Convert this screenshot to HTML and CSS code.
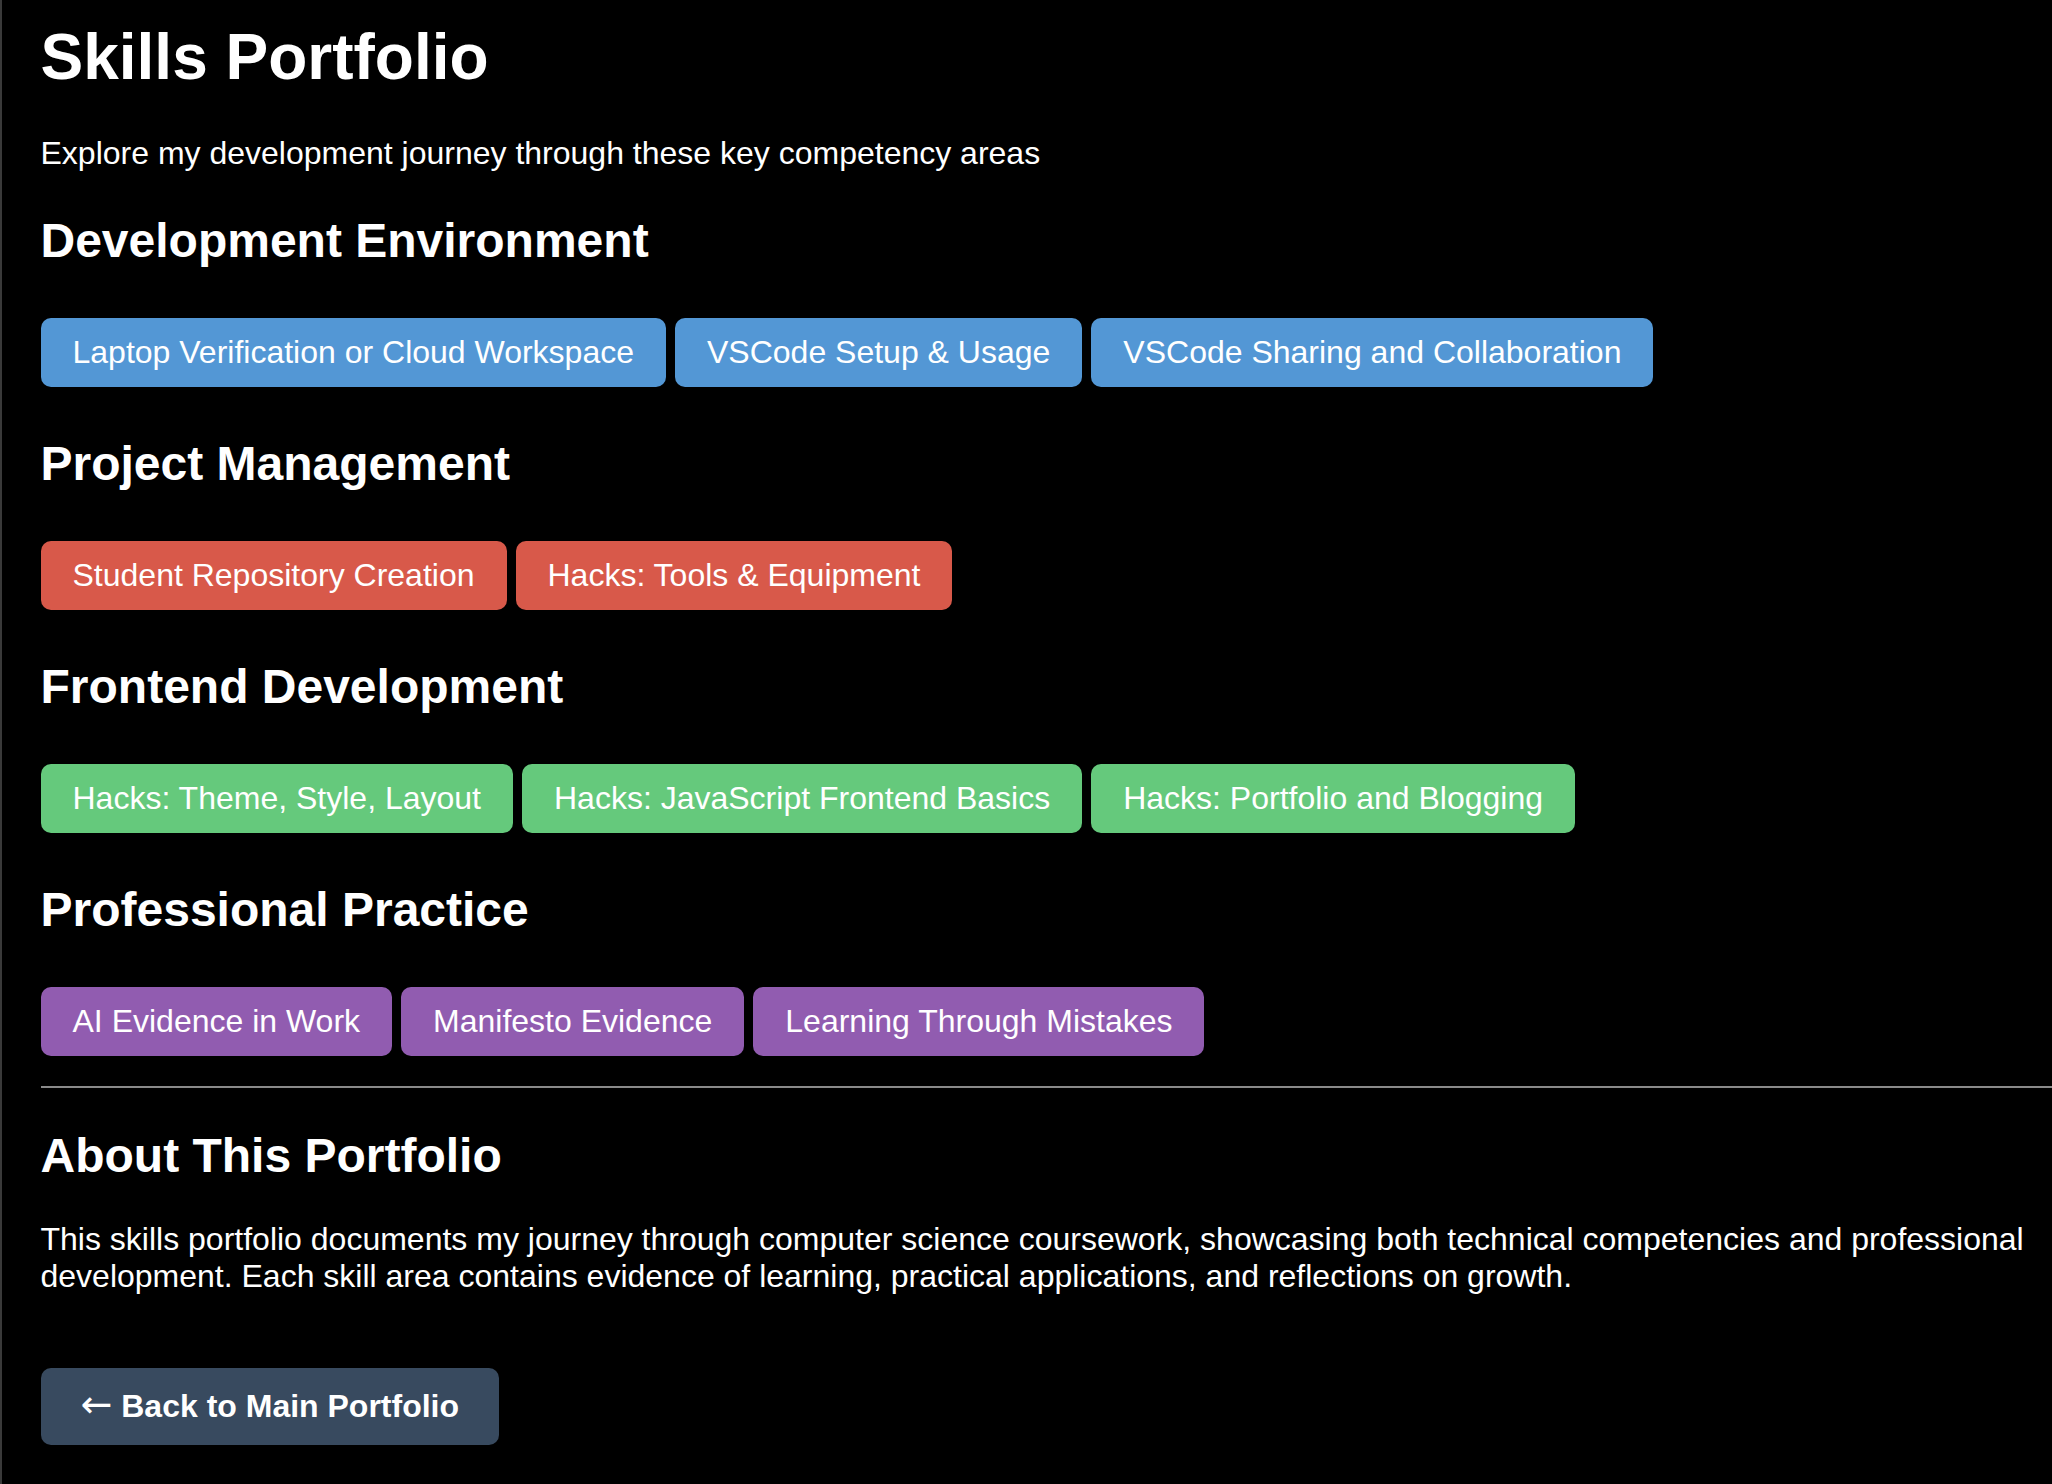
FILE: index.html
```html
<!DOCTYPE html>
<html lang="en">
<head>
<meta charset="utf-8">
<title>Skills Portfolio</title>
<link rel="stylesheet" href="styles.css">
</head>
<body>
<main class="page">
  <h1 class="title">Skills Portfolio</h1>
  <p class="intro">Explore my development journey through these key competency areas</p>

  <div class="groups">
    <section class="skill-group">
      <h2 class="group-title">Development Environment</h2>
      <div class="skill-list">
        <a class="skill skill-blue" href="#">Laptop Verification or Cloud Workspace</a>
        <a class="skill skill-blue" href="#">VSCode Setup &amp; Usage</a>
        <a class="skill skill-blue" href="#">VSCode Sharing and Collaboration</a>
      </div>
    </section>

    <section class="skill-group">
      <h2 class="group-title">Project Management</h2>
      <div class="skill-list">
        <a class="skill skill-red" href="#">Student Repository Creation</a>
        <a class="skill skill-red" href="#">Hacks: Tools &amp; Equipment</a>
      </div>
    </section>

    <section class="skill-group">
      <h2 class="group-title">Frontend Development</h2>
      <div class="skill-list">
        <a class="skill skill-green" href="#">Hacks: Theme, Style, Layout</a>
        <a class="skill skill-green" href="#">Hacks: JavaScript Frontend Basics</a>
        <a class="skill skill-green" href="#">Hacks: Portfolio and Blogging</a>
      </div>
    </section>

    <section class="skill-group">
      <h2 class="group-title">Professional Practice</h2>
      <div class="skill-list">
        <a class="skill skill-purple" href="#">AI Evidence in Work</a>
        <a class="skill skill-purple" href="#">Manifesto Evidence</a>
        <a class="skill skill-purple" href="#">Learning Through Mistakes</a>
      </div>
    </section>
  </div>

  <hr class="divider">

  <section class="about">
    <h2 class="group-title">About This Portfolio</h2>
    <p class="about-text">This skills portfolio documents my journey through computer science coursework, showcasing both technical competencies and professional development. Each skill area contains evidence of learning, practical applications, and reflections on growth.</p>
  </section>

  <div class="back-row">
    <a class="back-link" href="#"><span class="arrow">&larr;</span> Back to Main Portfolio</a>
  </div>
</main>
</body>
</html>
```

FILE: styles.css
```css
html, body {
  margin: 0;
  padding: 0;
  background: #000;
}

body {
  border-left: 2px solid #3a3a3a;
  min-height: 1484px;
  box-sizing: border-box;
  font-family: "Liberation Sans", Arial, Helvetica, sans-serif;
  color: #fff;
}

.page {
  padding: 20px 0 0 38.5px;
}

.title {
  margin: 0 0 41px;
  font-size: 64px;
  font-weight: 700;
  line-height: normal;
}

.intro {
  margin: 0 0 40.5px;
  font-size: 32px;
  line-height: normal;
}

.groups {
  display: flex;
  flex-direction: column;
  gap: 49px;
  margin-bottom: 30px;
}

.group-title {
  margin: 0;
  font-size: 48px;
  font-weight: 700;
  line-height: normal;
}

.skill-list {
  display: flex;
  flex-wrap: wrap;
  gap: 9px;
  margin-top: 50px;
}

.skill {
  display: inline-block;
  padding: 16px 32px;
  border-radius: 10px;
  font-size: 32px;
  line-height: normal;
  color: #fff;
  text-decoration: none;
}

.skill-blue { background: #5397d5; }
.skill-red { background: #d8594a; }
.skill-green { background: #65c97c; }
.skill-purple { background: #915cb0; }

.divider {
  margin: 0;
  border: 0;
  border-top: 2px solid #8a8a8a;
  height: 0;
}

.about {
  margin-top: 40px;
}

.about-text {
  margin: 38.5px 0 0;
  font-size: 32px;
  line-height: normal;
}

.back-row {
  margin-top: 73px;
}

.back-link {
  display: inline-block;
  padding: 20px 40px;
  border-radius: 10px;
  background: #384a5f;
  color: #fff;
  font-size: 32px;
  font-weight: 700;
  line-height: normal;
  text-decoration: none;
}

.arrow {
  font-family: "DejaVu Sans", sans-serif;
  font-weight: 400;
  font-size: 38px;
  line-height: 0;
}
```
